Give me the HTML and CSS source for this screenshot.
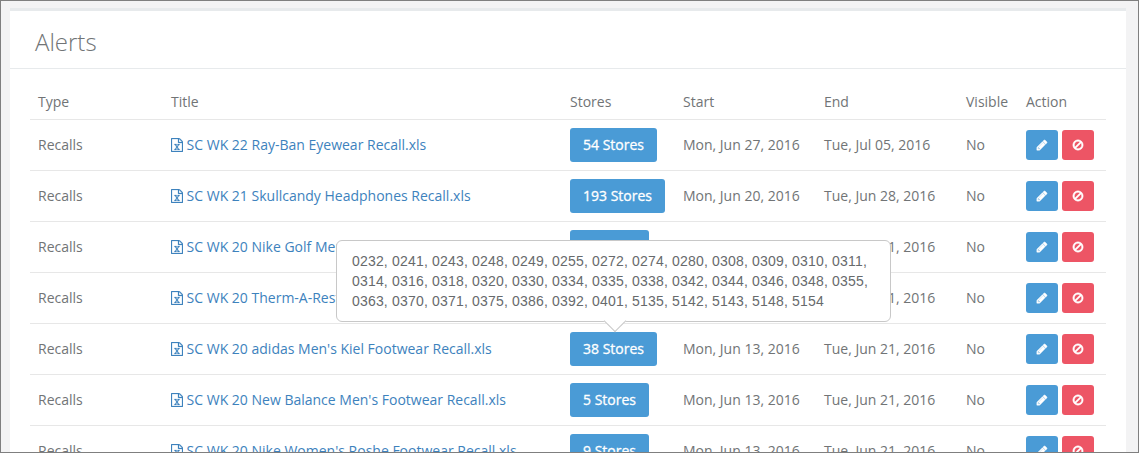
FILE: index.html
```html
<!DOCTYPE html>
<html lang="en">
<head>
<meta charset="utf-8">
<title>Alerts</title>
<link rel="stylesheet" href="styles.css">
</head>
<body>
<svg class="sprite" aria-hidden="true">
  <symbol id="excel" viewBox="128 0 1536 1792"><path d="M1596 380q28 28 48 76t20 88v1152q0 40-28 68t-68 28h-1344q-40 0-68-28t-28-68v-1600q0-40 28-68t68-28h896q40 0 88 20t76 48zm-444-244v376h376q-10-29-22-41l-313-313q-12-12-41-22zm384 1528v-1024h-416q-40 0-68-28t-28-68v-416h-768v1536h1280zm-979-234v106h281v-106h-75l103-161q5-7 10-16.5t7.5-13.5 3.5-4h2q1 4 5 10 2 4 4.500 7.500t6 8 6.500 8.500l107 161h-76v106h291v-106h-68l-192-273 195-282h67v-107h-279v107h74l-103 159q-4 7-10 16.500t-9 13.500l-2 3h-2q-1-4-5-10-6-11-17-23l-106-159h76v-107h-290v107h68l189 272-194 283h-68z"/></symbol>
  <symbol id="pencil" viewBox="0 0 1792 1792"><path d="M491 1536l91-91-235-235-91 91v107h128v128h107zm523-928q0-22-22-22-10 0-17 7l-542 542q-7 7-7 17 0 22 22 22 10 0 17-7l542-542q7-7 7-17zm-54-192l416 416-832 832h-416v-416zm683 96q0 53-37 90l-166 166-416-416 166-165q36-38 90-38 53 0 91 38l235 234q37 39 37 91z"/></symbol>
  <symbol id="ban" viewBox="0 0 1792 1792"><path d="M1440 893q0-161-87-295l-754 753q137 89 297 89 111 0 211.500-43.500t173.500-116.500 116-174.500 43-212.500zm-999 299l755-754q-135-91-300-91-148 0-273 73t-198 199-73 274q0 162 89 299zm1223-299q0 157-61 300t-163.500 246-245 164-298.500 61-298.500-61-245-164-163.500-246-61-300 61-299.500 163.500-245.500 245-164 298.500-61 298.500 61 245 164 163.500 245.500 61 299.500z"/></symbol>
</svg>
<main class="frame">
  <section class="panel">
    <h1 class="panel-title">Alerts</h1>
    <div class="table">
      <div class="row head"><span>Type</span><span>Title</span><span>Stores</span><span>Start</span><span>End</span><span>Visible</span><span>Action</span></div>
      <div class="row"><span>Recalls</span><a class="file"><svg><use href="#excel"/></svg>SC WK 22 Ray-Ban Eyewear Recall.xls</a><span><button class="stores">54 Stores</button></span><span>Mon, Jun 27, 2016</span><span>Tue, Jul 05, 2016</span><span>No</span><span class="actions"><button class="act edit"><svg><use href="#pencil"/></svg></button><button class="act ban"><svg><use href="#ban"/></svg></button></span></div>
      <div class="row"><span>Recalls</span><a class="file"><svg><use href="#excel"/></svg>SC WK 21 Skullcandy Headphones Recall.xls</a><span><button class="stores">193 Stores</button></span><span>Mon, Jun 20, 2016</span><span>Tue, Jun 28, 2016</span><span>No</span><span class="actions"><button class="act edit"><svg><use href="#pencil"/></svg></button><button class="act ban"><svg><use href="#ban"/></svg></button></span></div>
      <div class="row"><span>Recalls</span><a class="file"><svg><use href="#excel"/></svg>SC WK 20 Nike Golf Men's Recall.xls</a><span><button class="stores">5 Stores</button></span><span>Mon, Jun 13, 2016</span><span>Tue, Jun 21, 2016</span><span>No</span><span class="actions"><button class="act edit"><svg><use href="#pencil"/></svg></button><button class="act ban"><svg><use href="#ban"/></svg></button></span></div>
      <div class="row"><span>Recalls</span><a class="file"><svg><use href="#excel"/></svg>SC WK 20 Therm-A-Rest Recall.xls</a><span><button class="stores">5 Stores</button></span><span>Mon, Jun 13, 2016</span><span>Tue, Jun 21, 2016</span><span>No</span><span class="actions"><button class="act edit"><svg><use href="#pencil"/></svg></button><button class="act ban"><svg><use href="#ban"/></svg></button></span></div>
      <div class="row"><span>Recalls</span><a class="file"><svg><use href="#excel"/></svg>SC WK 20 adidas Men's Kiel Footwear Recall.xls</a><span class="anchor"><button class="stores">38 Stores</button><span class="popover">0232, 0241, 0243, 0248, 0249, 0255, 0272, 0274, 0280, 0308, 0309, 0310, 0311,<br>0314, 0316, 0318, 0320, 0330, 0334, 0335, 0338, 0342, 0344, 0346, 0348, 0355,<br>0363, 0370, 0371, 0375, 0386, 0392, 0401, 5135, 5142, 5143, 5148, 5154</span></span><span>Mon, Jun 13, 2016</span><span>Tue, Jun 21, 2016</span><span>No</span><span class="actions"><button class="act edit"><svg><use href="#pencil"/></svg></button><button class="act ban"><svg><use href="#ban"/></svg></button></span></div>
      <div class="row"><span>Recalls</span><a class="file"><svg><use href="#excel"/></svg>SC WK 20 New Balance Men's Footwear Recall.xls</a><span><button class="stores">5 Stores</button></span><span>Mon, Jun 13, 2016</span><span>Tue, Jun 21, 2016</span><span>No</span><span class="actions"><button class="act edit"><svg><use href="#pencil"/></svg></button><button class="act ban"><svg><use href="#ban"/></svg></button></span></div>
      <div class="row"><span>Recalls</span><a class="file"><svg><use href="#excel"/></svg>SC WK 20 Nike Women's Roshe Footwear Recall.xls</a><span><button class="stores">9 Stores</button></span><span>Mon, Jun 13, 2016</span><span>Tue, Jun 21, 2016</span><span>No</span><span class="actions"><button class="act edit"><svg><use href="#pencil"/></svg></button><button class="act ban"><svg><use href="#ban"/></svg></button></span></div>
    </div>
  </section>
</main>
</body>
</html>
```
FILE: styles.css
```css
* { box-sizing: border-box; }
body {
  margin: 0;
  font: 14px/20px "Open Sans", sans-serif;
  color: #717476;
}
.sprite { display: none; }
svg { fill: currentColor; display: block; flex: none; }
.frame {
  height: 453px;
  overflow: hidden;
  padding: 7px 12px 0 9px;
  border: 1px solid #7f7f7f;
  background: #f3f3f4;
}
.panel {
  height: 520px;
  background: #fff;
  border-top: 3px solid #e7eaec;
}
.panel-title {
  margin: 0;
  height: 58px;
  padding: 14px 25px 0;
  border-bottom: 1px solid #e7eaec;
  font-size: 24px;
  line-height: 34px;
  font-weight: 300;
}
.table { margin: 15px 20px 0; }
.row {
  display: grid;
  grid-template-columns: 133px 399px 113px 141px 142px 60px 1fr;
  align-items: center;
  height: 51px;
  padding-left: 8px;
  border-top: 1px solid #e7e7e7;
  white-space: nowrap;
}
.head { height: 35px; border-top: 0; }
.file { display: flex; align-items: center; gap: 3.600px; color: #3d82bd; }
.file svg { width: 12px; height: 14px; stroke: currentColor; stroke-width: 30px; }
button {
  display: block;
  margin: 0;
  border: 0;
  border-radius: 3px;
  color: #fff;
  background: #4a9bd6;
}
.stores {
  height: 34px;
  padding: 0 13px;
  font: 14px/20px "Open Sans", sans-serif;
  -webkit-text-stroke: .3px #fff;
}
.actions { display: flex; gap: 4px; }
.act {
  display: flex;
  align-items: center;
  justify-content: center;
  width: 32px;
  height: 30px;
  padding: 0;
}
.act svg { width: 12px; height: 12px; stroke: currentColor; stroke-width: 70px; }
.ban { background: #ed5565; }
.anchor { position: relative; }
.popover {
  position: absolute;
  left: -234px;
  bottom: 44px;
  width: 555px;
  height: 82px;
  padding: 10px 15px;
  border: 1px solid #c8c8c8;
  border-radius: 6px;
  background: #fff;
  color: #676a6c;
  font: 14px/20px "Liberation Sans", Arial, sans-serif;
  letter-spacing: .181px;
}
.popover::after {
  content: "";
  position: absolute;
  left: 269.500px;
  bottom: -7.800px;
  width: 15px;
  height: 15px;
  border: solid #c8c8c8;
  border-width: 0 1px 1px 0;
  background: #fff;
  transform: rotate(45deg);
}
```
